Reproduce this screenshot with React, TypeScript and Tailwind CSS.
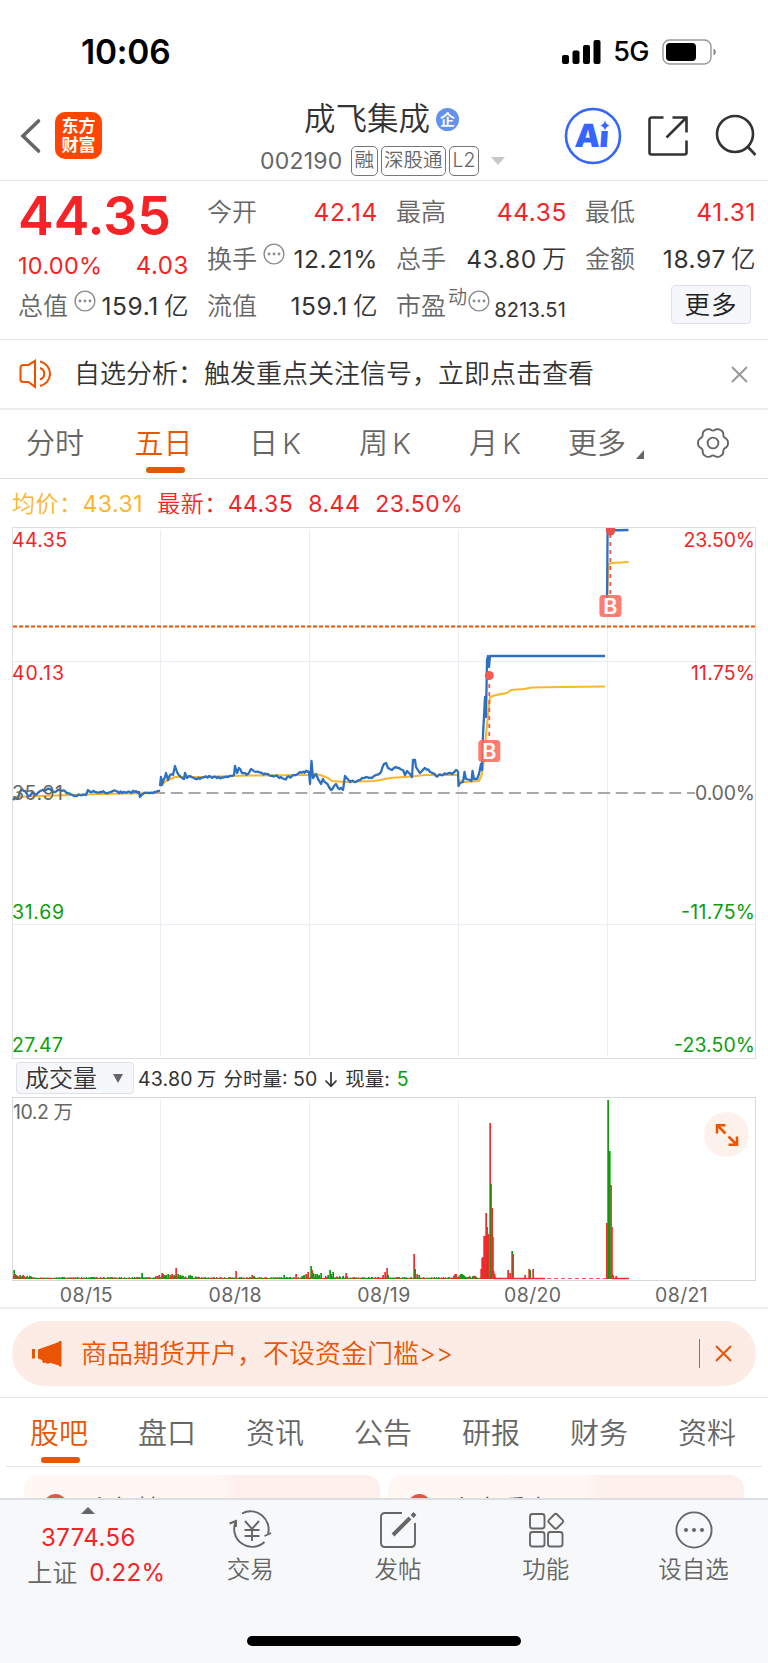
import type { ReactNode } from 'react';

const FONT = "font-[Inter,'Noto_Sans_CJK_SC',sans-serif]";

type Point = [number, number];

const toPath = (points: Point[]) =>
  points.map(([x, y], i) => `${i ? 'L' : 'M'}${x} ${y}`).join('');

// small deterministic jitter, so that the minute lines look traded
function jitter(points: Point[], amp: number): Point[] {
  const out: Point[] = [];
  points.forEach(([x, y], i) => {
    out.push([x, y]);
    const next = points[i + 1];
    if (!next) return;
    const steps = Math.floor((next[0] - x) / 1.4);
    for (let s = 1; s < steps; s++) {
      const t = s / steps;
      const px = x + (next[0] - x) * t;
      const n = Math.sin(px * 12.9898) * 43758.5453;
      const r = n - Math.floor(n) - 0.5;
      out.push([+px.toFixed(1), +(y + (next[1] - y) * t + r * amp).toFixed(1)]);
    }
  });
  return out;
}

const PRICE: Point[][] = [
  [
    [13, 800], [15, 798], [17, 799], [19, 795], [22, 789], [25, 791], [28, 796], [32, 793], [36, 795], [40, 791], [46, 790],
    [50, 789], [55, 792], [58, 790], [62, 791], [68, 793], [74, 796], [80, 795], [86, 795], [88, 790], [92, 792],
    [100, 792], [108, 793], [116, 791], [122, 793], [130, 792], [139, 792], [140, 797], [143, 794], [150, 793], [156, 792], [160, 791],
  ],
  [
    [160, 786], [161, 777], [162, 785], [165, 777], [166, 773], [168, 780], [170, 775], [173, 775], [175, 766], [177, 772],
    [180, 776], [184, 779], [185, 773], [187, 778], [190, 776], [194, 778], [200, 779], [209, 776], [217, 778],
    [225, 777], [234, 775], [235, 766], [237, 773], [239, 768], [242, 773], [248, 774], [251, 769], [256, 772],
    [262, 773], [268, 774], [275, 776], [284, 779], [292, 776], [300, 772], [309, 771],
  ],
  [
    [309, 771], [310, 784], [311.5, 761], [313, 778], [316, 774], [318, 779], [321, 784], [323, 779], [326, 783], [329, 787], [331, 790],
    [334, 786], [336, 784], [338, 788], [341, 788], [343, 790], [345, 776], [350, 782], [357, 781], [362, 778],
    [366, 777], [372, 778], [376, 775], [381, 772], [384, 764], [386, 763], [388, 768], [392, 770], [396, 767], [399, 768],
    [403, 770], [405, 775], [407, 771], [410, 774], [412, 777], [413, 760], [415, 760], [416, 767], [420, 773],
    [425, 768], [430, 772], [436, 776], [446, 774], [452, 774], [456, 770], [458, 771],
  ],
  [
    [458, 771], [458.5, 786], [460, 783], [463, 782], [464.5, 772], [466, 779], [470, 780], [471.5, 781], [472.5, 771], [474, 779],
    [477, 779], [479, 774], [481, 764], [482, 770], [483, 735], [485, 697], [486, 717], [487, 660], [488, 656], [489, 667], [490, 656],
    [605, 656],
  ],
  [[606.8, 614], [607.2, 580], [607.6, 530.5], [628.5, 530]],
];

const AVERAGE: Point[][] = [
  [[13, 797], [40, 796], [100, 794], [160, 793]],
  [[160, 786], [166, 781], [175, 777], [200, 777], [250, 775.5], [309, 775]],
  [[309, 773], [320, 775], [328, 778], [332, 781], [345, 782], [375, 781], [390, 778], [412, 776.5], [425, 775], [458, 775]],
  [[459, 780], [464, 782], [472, 781.5], [479, 781], [482, 774], [484, 760], [486, 735], [488, 715], [490, 697], [496, 695], [507, 693], [511, 690], [524, 689], [532, 687.5], [560, 687], [605, 686.5]],
  [[607, 600], [608.5, 564], [612, 563], [628.5, 562]],
];

const GRID_X = [160.5, 309.5, 458.5, 607.5];

// x, height, colour (r = up, g = down)
const SPIKES: [number, number, 'r' | 'g'][] = [
  [14, 9, 'g'], [15, 5, 'r'], [16, 4, 'r'], [17, 3, 'g'], [20, 4, 'g'], [23, 4, 'r'], [24, 3, 'r'], [142, 6, 'g'],
  [157, 3, 'r'], [159, 4, 'r'], [162, 6, 'r'], [163, 5, 'r'], [164, 4, 'g'], [166, 4, 'g'], [168, 5, 'g'], [170, 4, 'r'], [172, 5, 'r'], [174, 4, 'g'],
  [176, 11, 'r'], [178, 5, 'g'], [180, 4, 'g'], [190, 4, 'g'], [236, 8, 'r'], [252, 4, 'r'], [254, 3, 'g'], [284, 4, 'g'], [296, 5, 'r'],
  [302, 3, 'g'], [304, 4, 'g'], [306, 5, 'r'], [308, 7, 'r'], [311, 13, 'g'], [312, 9, 'r'], [313, 6, 'g'], [315, 5, 'g'], [317, 5, 'g'], [319, 4, 'g'], [321, 6, 'g'],
  [328, 4, 'g'], [330, 9, 'g'], [331, 5, 'g'], [333, 7, 'g'], [346, 6, 'r'], [383, 4, 'r'], [385, 7, 'r'], [387, 11, 'r'], [388, 4, 'g'],
  [414, 25, 'r'], [415, 10, 'g'], [417, 5, 'r'], [419, 4, 'g'], [455, 5, 'r'], [456, 5, 'r'], [460, 4, 'g'], [461, 5, 'g'], [462, 5, 'g'], [463, 4, 'g'],
  [481, 10, 'r'], [482, 21, 'r'], [483, 22, 'r'], [484, 43, 'r'], [485, 43, 'r'], [486, 66, 'r'], [487, 52, 'r'], [487.6, 26, 'g'], [488.6, 45, 'r'],
  [490, 156, 'r'], [490.9, 95, 'g'], [492, 71, 'r'], [492.8, 42, 'r'], [493.5, 8, 'r'], [494.5, 5, 'r'],
  [508, 9, 'r'], [510, 6, 'r'], [512, 28, 'g'], [513, 25, 'r'], [525, 4, 'r'], [529, 10, 'r'], [530, 9, 'g'], [533, 10, 'r'],
  [606.7, 56, 'r'], [610.9, 94, 'r'], [611.8, 52, 'r'], [608, 179, 'g'], [609.6, 128, 'g'], [613, 4, 'r'], [616, 3, 'r'],
];

const COLORS = { r: '#f52a2d', g: '#0a9c0a' };

const BASE_BARS = Array.from({ length: 484 }, (_, i) => {
  const x = 13 + i;
  const n = Math.abs(Math.sin(x * 78.233) * 43758.5453) % 1;
  const m = Math.abs(Math.sin(x * 12.11) * 9631.17) % 1;
  const lively = [18, 168, 185, 316, 334, 466, 492].some((c) => Math.abs(x - c) < 14);
  return { x, h: 0.9 + n * (lively ? 2.6 : 1.2), c: m > 0.45 ? COLORS.g : COLORS.r };
});

function Marker({ x, y }: { x: number; y: number }) {
  return (
    <g>
      <rect x={x} y={y} width="22" height="22" rx="3.5" fill="#ff6a5c" fillOpacity="0.88" />
      <text x={x + 11} y={y + 18.5} textAnchor="middle" fontSize="21.5" fontWeight="600" fill="#fff">
        B
      </text>
    </g>
  );
}

function PriceChart() {
  return (
    <svg className="block font-normal" width="768" height="532" viewBox="0 527 768 532" fontSize="19.5">
      <path d="M160.5 530V1056M309.5 530V1056M458.5 530V1056M607.5 530V1056M13 661.5H755M13 924.5H755" stroke="#e9edf4" fill="none" />
      <rect x="12.5" y="527.5" width="743" height="531" fill="none" stroke="#dcdee3" />
      <path d="M13 626.5H755" stroke="#ea5504" strokeWidth="2" strokeDasharray="4 2" />
      <path d="M160 793H695" stroke="#a9a9a9" strokeWidth="2" strokeDasharray="12 5.8" strokeDashoffset="7" />
      <g fill="none" stroke="#fdb52b" strokeWidth="2.1" strokeLinejoin="round">
        {AVERAGE.map((day, i) => (
          <path key={i} d={toPath(day)} />
        ))}
      </g>
      <g fill="none" stroke="#2d70c0" strokeWidth="2.3" strokeLinejoin="round">
        {PRICE.map((day, i) => (
          <path key={i} d={toPath(i < 3 ? jitter(day, 2.4) : day)} />
        ))}
      </g>
      <path d="M489.3 676V740M610.3 534V595" stroke="#fb5347" strokeWidth="1.8" strokeDasharray="4 4" />
      <circle cx="489.3" cy="675.5" r="4.5" fill="#f45b52" />
      <path d="M606 528h9v3a4.5 4.5 0 0 1-9 0z" fill="#e5514b" />
      <Marker x={478.3} y={740} />
      <Marker x={599.4} y={595} />
      <g fill="#f52325">
        <text x="12" y="547.3" textLength="55">44.35</text>
        <text x="755" y="547.3" textAnchor="end" textLength="71.5">23.50%</text>
        <text x="12" y="680" textLength="52">40.13</text>
        <text x="755" y="680" textAnchor="end" textLength="64">11.75%</text>
      </g>
      <g fill="#666">
        <text x="12" y="800" textLength="51">35.91</text>
        <text x="755" y="800" textAnchor="end" textLength="60">0.00%</text>
      </g>
      <g fill="#0ba00b">
        <text x="12" y="919" textLength="52">31.69</text>
        <text x="755" y="919" textAnchor="end" textLength="74">-11.75%</text>
        <text x="12" y="1051.5" textLength="51">27.47</text>
        <text x="755" y="1051.5" textAnchor="end" textLength="81">-23.50%</text>
      </g>
    </svg>
  );
}

function VolumeChart() {
  return (
    <svg className="block" width="768" height="184" viewBox="0 1097 768 184" fontSize="19.5">
      {GRID_X.map((x) => (
        <path key={x} d={`M${x} 1100V1280`} stroke="#e9edf4" />
      ))}
      <rect x="12.5" y="1097.5" width="743" height="183" fill="none" stroke="#d6d8dd" />
      {BASE_BARS.map(({ x, h, c }) => (
        <rect key={x} x={x} y={1279 - h} width="1.1" height={h} fill={c} />
      ))}
      {SPIKES.map(([x, h, c]) => (
        <rect key={x} x={x - 0.7} y={1279 - h} width="1.7" height={h} fill={COLORS[c]} />
      ))}
      <path d="M493 1278.5h52M612 1278.5h17" stroke={COLORS.r} strokeWidth="1.4" />
      <path d="M547 1278.5h60" stroke={COLORS.r} strokeDasharray="4 3" strokeWidth="0.8" />
      <text x="13" y="1119" fill="#666" textLength="60" fontWeight="400">
        10.2 万
      </text>
    </svg>
  );
}

function Dots() {
  return (
    <svg className="shrink-0" width="22" height="22" viewBox="0 0 22 22" fill="#8a8a8a">
      <circle cx="11" cy="11" r="9.9" fill="none" stroke="#8a8a8a" strokeWidth="1.4" />
      <circle cx="6" cy="11" r="1.4" />
      <circle cx="11" cy="11" r="1.4" />
      <circle cx="16" cy="11" r="1.4" />
    </svg>
  );
}

function Stat({
  label,
  value,
  unit,
  red,
  icon,
}: {
  label: string;
  value: string;
  unit?: string;
  red?: boolean;
  icon?: boolean;
}) {
  return (
    <div className="flex h-[47px] items-center justify-between whitespace-nowrap">
      <span className="flex items-center text-[25px] text-[#666]">
        {label}
        {icon && <span className="-mt-3 ml-[6px]"><Dots /></span>}
      </span>
      <span
        className={
          red
            ? '-mr-px text-[24.5px] font-normal tracking-[0.6px] text-[#f52325]'
            : '-mr-px text-[24.5px] font-normal tracking-[0.6px] text-[#333]'
        }
      >
        {value}
        {unit && <span className="ml-[5px] font-[350]">{unit}</span>}
      </span>
    </div>
  );
}

function StatusBar() {
  return (
    <div className="flex h-[92px] items-center justify-between pt-[12px] pr-[50px] pl-[81px]">
      <span className="text-[33.5px] font-semibold tracking-[-0.2px] text-black">10:06</span>
      <div className="flex items-center">
        <svg width="40" height="26" viewBox="0 0 40 26">
          <rect x="1" y="16" width="7" height="9" rx="2" />
          <rect x="11.5" y="11.5" width="7" height="13.5" rx="2" />
          <rect x="22" y="6" width="7" height="19" rx="2" />
          <rect x="32.5" y="1" width="7" height="24" rx="2" />
        </svg>
        <span className="ml-3 text-[27px] font-medium tracking-[-0.5px] text-black">5G</span>
        <svg className="ml-[13px]" width="56" height="26" viewBox="0 0 56 26">
          <rect x="1" y="1" width="48" height="24" rx="6.5" fill="none" stroke="#999" strokeWidth="1.4" />
          <rect x="4" y="4" width="30" height="18" rx="4" />
          <path d="M51.5 9.5c3 1.5 3 5.5 0 7z" fill="#888" />
        </svg>
      </div>
    </div>
  );
}

function Badge({ children }: { children: ReactNode }) {
  return (
    <span className="flex h-[30px] items-center justify-center rounded-[5px] border border-[#777] px-[2.5px] text-[19.5px] leading-none text-[#666]">
      {children}
    </span>
  );
}

function Header() {
  return (
    <div className="flex h-[89px] border-b border-[#e8e8e8]">
      <div className="flex w-[261px] items-start pt-5 pl-5">
        <svg className="mt-[6px]" width="22" height="36" viewBox="0 0 22 36" fill="none" stroke="#666" strokeWidth="3.6" strokeLinecap="round">
          <path d="M18.5 3L3 18l15.5 15" />
        </svg>
        <div className="ml-[13px] flex h-[47px] w-[47px] flex-col items-center justify-center rounded-[10px] bg-[#ff4500] text-[17px] leading-[19px] font-bold text-white">
          <span>东方</span>
          <span>财富</span>
        </div>
      </div>
      <div className="flex flex-1 flex-col whitespace-nowrap">
        <div className="mt-[7px] flex h-10 items-center pl-[43px]">
          <span className="text-[31.5px] text-[#333]">成飞集成</span>
          <span className="ml-[6px] flex h-[23px] w-[23px] items-center justify-center rounded-full bg-[#6490ee] text-[15px] leading-none font-bold text-white">
            企
          </span>
        </div>
        <div className="mt-[7px] flex h-[30px] items-center">
          <span className="mr-[8px] -ml-px w-[83px] text-[23px] font-normal tracking-[0.2px] text-[#666]">002190</span>
          <div className="flex gap-[3px]">
            <Badge>融</Badge>
            <Badge>深股通</Badge>
            <Badge>L2</Badge>
          </div>
          <svg className="ml-3" width="14" height="8" viewBox="0 0 14 8" fill="#c8c8c8">
            <path d="M0 0h14l-7 8z" />
          </svg>
        </div>
      </div>
      <div className="flex w-[204px] items-start pt-[15px]">
        <svg width="58" height="58" viewBox="0 0 58 58" fill="#3565ff">
          <circle cx="29" cy="29" r="27" fill="none" stroke="#3565ff" strokeWidth="2.6" />
          <text x="11" y="40" fontSize="32" fontWeight="900" textLength="34" transform="skewX(-4) translate(2 0)">Ai</text>
          <rect x="34" y="12" width="13" height="12" fill="#fff" />
          <path d="M41 13.5c1 3.2 1.8 4 5 5-3.2 1-4 1.8-5 5-1-3.2-1.8-4-5-5 3.2-1 4-1.8 5-5z" />
        </svg>
        <svg className="mt-[8px] ml-[25px]" width="42" height="42" viewBox="0 0 42 42" fill="none" stroke="#333" strokeWidth="2.6">
          <path d="M16.5 2.5H4.5a2 2 0 0 0-2 2v33a2 2 0 0 0 2 2h33a2 2 0 0 0 2-2V25.500M25.500 2.500h14v15M39.500 2.500L19.500 22.500" />
        </svg>
        <svg className="mt-[7px] ml-[25px]" width="44" height="44" viewBox="0 0 44 44" fill="none" stroke="#333" strokeWidth="2.6">
          <circle cx="21" cy="20" r="18" />
          <path d="M33.5 32.5l8 8.5" />
        </svg>
      </div>
    </div>
  );
}

function Quote() {
  return (
    <div className="grid h-[159px] grid-cols-[170px_170px_170px_170px] gap-x-[19px] border-b border-[#e5e5e5] pt-[8px] pl-[18px]">
      <div className="flex flex-col">
        <div className="-mt-px h-[57px] text-[53.5px] leading-[56px] font-semibold text-[#f52325]">44.35</div>
        <div className="flex h-[38px] items-center justify-between pt-[3px] text-[23.5px] font-normal text-[#f52325]">
          <span className="tracking-[0.3px]">10.00%</span>
          <span className="-mr-px text-[24px] tracking-[0.6px]">4.03</span>
        </div>
        <Stat label="总值" value="159.1" unit="亿" icon />
      </div>
      <div>
        <Stat label="今开" value="42.14" red />
        <Stat label="换手" value="12.21%" icon />
        <Stat label="流值" value="159.1" unit="亿" />
      </div>
      <div>
        <Stat label="最高" value="44.35" red />
        <Stat label="总手" value="43.80" unit="万" />
        <div className="flex h-[47px] items-center whitespace-nowrap">
          <span className="text-[25px] text-[#666]">市盈</span>
          <span className="-mt-4 ml-[2px] text-[19px] text-[#666]">动</span>
          <span className="-mt-3 ml-px"><Dots /></span>
          <span className="mt-[7px] ml-auto text-[20px] font-normal tracking-[0.2px] text-[#333]">8213.51</span>
        </div>
      </div>
      <div>
        <Stat label="最低" value="41.31" red />
        <Stat label="金额" value="18.97" unit="亿" />
        <div className="mt-[2px] ml-[86px] flex h-[39px] w-20 items-center justify-center rounded border border-[#dfe1e6] bg-[#f6f7fa] pt-[2px] text-[25.5px] tracking-[1px] text-[#222]">
          更多
        </div>
      </div>
    </div>
  );
}

function Notice() {
  return (
    <div className="flex h-[70px] items-center border-b-2 border-[#ededed] pr-[20px] pl-[19px]">
      <svg width="34" height="30" viewBox="0 0 34 30" fill="none" stroke="#ea5504" strokeWidth="2.1">
        <path d="M16 1.8L9.5 6H4.5Q1.5 6 1.5 9v11.5Q1.5 23 4.5 23h5L16 27.8zM21 2.5a12.5 12.5 0 0 1 0 24.5M21 9a6 6 0 0 1 0 11.5" />
      </svg>
      <span className="-mt-px ml-[21px] text-[26px] text-[#333]">自选分析：触发重点关注信号，立即点击查看</span>
      <svg className="ml-auto" width="17" height="17" viewBox="0 0 17 17" stroke="#999" strokeWidth="2">
        <path d="M1 1l15 15M16 1L1 16" />
      </svg>
    </div>
  );
}

const GEAR =
  Array.from({ length: 72 }, (_, i) => {
    const a = (i / 72) * Math.PI * 2;
    const r = 14 + 1.3 * Math.cos(6 * a) - 0.3 * Math.cos(12 * a);
    return `${i ? 'L' : 'M'}${(17 + r * Math.cos(a)).toFixed(2)} ${(17 + r * Math.sin(a)).toFixed(2)}`;
  }).join('') + 'z';

function PeriodTabs() {
  const tabs = ['分时', '五日', '日 K', '周 K', '月 K'];
  return (
    <div className="flex h-[69px] border-b border-[#dcdde3] text-[29px] text-[#666]">
      {tabs.map((tab) => (
        <div key={tab} className="flex w-[110px] flex-col items-center">
          <span
            className={
              tab === '五日'
                ? 'mt-[13px] -ml-[3px] leading-[42px] whitespace-nowrap text-[#ea5504]'
                : 'mt-[13px] leading-[42px] [word-spacing:-4px] whitespace-nowrap'
            }
          >
            {tab}
          </span>
          {tab === '五日' && <span className="mt-[2px] h-[6px] w-[39px] rounded-full bg-[#ea5504]" />}
        </div>
      ))}
      <span className="mt-[13px] ml-[18px] leading-[42px]">更多</span>
      <svg className="mt-[40px] ml-[10px]" width="8" height="9" viewBox="0 0 8 9" fill="#666">
        <path d="M8 0v9H0z" />
      </svg>
      <svg className="mt-4 ml-[52px]" width="34" height="34" viewBox="0 0 34 34" fill="none" stroke="#666" strokeWidth="1.9">
        <path d={GEAR} />
        <circle cx="17" cy="17" r="5.4" />
      </svg>
    </div>
  );
}

function VolumeHeader() {
  return (
    <div className="flex h-[38px] items-center pl-4 text-[19.5px] whitespace-nowrap text-[#333]">
      <div className="flex h-8 w-[118px] items-center justify-between rounded border border-[#dfe1e6] bg-[#f6f7fa] pr-[10px] pl-[8px] text-[24px]">
        <span className="pt-[2px]">成交量</span>
        <svg width="10" height="9" viewBox="0 0 10 9" fill="#666">
          <path d="M0 0h10L5 9z" />
        </svg>
      </div>
      <div className="flex items-center pt-[3px] font-normal">
        <span className="ml-[4px] tracking-[0.2px]">43.80<span className="ml-[4px]">万</span></span>
        <span className="ml-[7px]">分时量: 50</span>
        <svg className="mx-[7px]" width="14" height="17" viewBox="0 0 14 17" fill="none" stroke="#333" strokeWidth="1.7">
          <path d="M7 1v14M1.5 9.5L7 15.3l5.5-5.8" />
        </svg>
        <span>现量:</span>
        <span className="ml-[7px] text-[#0ba00b]">5</span>
      </div>
    </div>
  );
}

function Banner() {
  return (
    <div className="mx-3 mt-3 flex h-[65px] items-center rounded-full bg-[#fcece5] pr-6 pl-5 text-[#ea5504]">
      <svg width="30" height="26" viewBox="0 0 30 26" fill="#ea5504">
        <path d="M0 8h3v9.5H0zM6 8.5L27 1V0h2.5v25.5H27v-1l-9-2.8c-1.5 1.5-3 1.3-4 0l-3 .3-1-3-4-1.5z" />
      </svg>
      <span className="ml-[19px] text-[26px]">{'商品期货开户，不设资金门槛>>'}</span>
      <span className="ml-auto h-[29px] w-[1.5px] bg-[#ea5504]" />
      <svg className="ml-[15px]" width="17" height="17" viewBox="0 0 17 17" stroke="#ea5504" strokeWidth="2">
        <path d="M1 1l15 15M16 1L1 16" />
      </svg>
    </div>
  );
}

function SectionTabs() {
  const tabs = ['股吧', '盘口', '资讯', '公告', '研报', '财务', '资料'];
  return (
    <div className="mx-[6px] flex h-[69px] border-b border-[#e3e3e3] text-[29px] text-[#666]">
      {tabs.map((tab, i) => (
        <div key={tab} className="flex w-[108px] flex-col items-center">
          <span
            className={
              i === 0
                ? 'mt-[15px] -ml-[2px] leading-[42px] text-[#ea5504]'
                : 'mt-[15px] -ml-[2px] leading-[42px]'
            }
          >
            {tab}
          </span>
          {i === 0 && <span className="mt-[2px] h-[6px] w-[39px] rounded-full bg-[#ea5504]" />}
        </div>
      ))}
    </div>
  );
}

// only the top edge of the cards shows above the bottom bar
function Cards() {
  return (
    <div className="flex h-[31px] gap-2 overflow-hidden px-6 pt-2">
      {['人气榜', '主力看点'].map((title) => (
        <div
          key={title}
          className="flex h-20 w-[356px] items-start rounded-[14px] bg-linear-to-r from-[#fef7f4] from-55% to-[#fdefec] to-60% pt-[19px] pl-5"
        >
          <span className="h-[23px] w-[23px] rounded-full bg-[#e0564f]" />
          <span className="ml-5 text-[25px] leading-[30px] text-[#555]">{title}</span>
        </div>
      ))}
    </div>
  );
}

function NavItem({ label, children }: { label: string; children: ReactNode }) {
  return (
    <div className="flex w-[148px] flex-col items-center pt-[9px]">
      <svg width="44" height="42" viewBox="0 0 44 42" fill="none" stroke="#666" strokeWidth="1.9">
        {children}
      </svg>
      <span className="mt-px -ml-px text-[23.5px] leading-9">{label}</span>
    </div>
  );
}

function BottomBar() {
  return (
    <div className="flex h-[166px] flex-col border-t-2 border-[#dcdee3] bg-[#f6f8fa] text-[#666]">
      <div className="flex">
        <div className="flex w-[177px] flex-col items-center pt-[7px] text-[24px]">
          <svg width="14" height="7" viewBox="0 0 14 7" fill="#666">
            <path d="M7 0l7 7H0z" />
          </svg>
          <span className="mt-[6px] leading-9 font-normal tracking-[0.4px] text-[#f52325]">3774.56</span>
          <span className="ml-4 flex gap-[12px] leading-[34px]">
            <span className="text-[25px]">上证</span>
            <span className="font-normal tracking-[0.4px] text-[#f52325]">0.22%</span>
          </span>
        </div>
        <NavItem label="交易">
          <path d="M13 4.5A18 18 0 0 1 39 25M35.5 33A18 18 0 0 1 7 12M.5 14.5L7 12v6M35.5 27l6.5-3" />
          <path d="M16 12l7 8 7-8M15.5 21h15M15.5 27h15M23 20v12" />
        </NavItem>
        <NavItem label="发帖">
          <path d="M26 4H9q-4 0-4 4v26q0 4 4 4h26q4 0 4-4V14" />
          <path d="M17 26l17-17M36 7.5l3-3" strokeWidth="4" />
        </NavItem>
        <NavItem label="功能">
          <rect x="6" y="5" width="14.5" height="14.5" rx="2.5" />
          <rect x="6" y="23" width="14.5" height="14.5" rx="2.5" />
          <rect x="24" y="23" width="14.5" height="14.5" rx="2.5" />
          <rect x="26" y="6.5" width="11.5" height="11.5" rx="2" transform="rotate(45 31.75 12.25)" />
        </NavItem>
        <NavItem label="设自选">
          <circle cx="22" cy="21" r="17.6" />
          <g fill="#666" stroke="none">
            <circle cx="14" cy="21" r="2" />
            <circle cx="22" cy="21" r="2" />
            <circle cx="30" cy="21" r="2" />
          </g>
        </NavItem>
      </div>
      <div className="mx-auto mt-auto mb-[18px] h-[10px] w-[274px] rounded-full bg-black" />
    </div>
  );
}

export default function App() {
  return (
    <div className={`${FONT} h-[1663px] w-[768px] overflow-hidden bg-white font-[350]`}>
      <StatusBar />
      <Header />
      <Quote />
      <Notice />
      <PeriodTabs />
      <div className="flex h-[48px] items-center gap-[15px] pt-[2px] pl-3 text-[23px] font-normal tracking-[0.5px] whitespace-nowrap text-[#f52325]">
        <span className="text-[#fdb52b]"><span className="font-[350]">均价：</span>43.31</span>
        <span className="-ml-px"><span className="font-[350]">最新：</span>44.35</span>
        <span>8.44</span>
        <span>23.50%</span>
      </div>
      <div className="relative">
        <PriceChart />
        <VolumeHeader />
        <VolumeChart />
        <div className="absolute right-[19px] bottom-[124px] flex h-[45px] w-[45px] items-center justify-center rounded-full bg-[#fdf1eb]">
          <svg width="24" height="24" viewBox="0 0 24 24" fill="none" stroke="#ea5504" strokeWidth="2.5">
            <path d="M2 10.5V2.2h8.5M2.5 2.5l8 8M22 13.5v8.3h-8.5M21.5 21.5l-8-8" />
          </svg>
        </div>
      </div>
      <div className="flex h-[28px] border-b-2 border-[#eee] pl-3 text-[19.5px] leading-[29px] font-normal tracking-[0.4px] text-[#666]">
        {['08/15', '08/18', '08/19', '08/20', '08/21'].map((day) => (
          <span key={day} className="w-[148.8px] text-center">
            {day}
          </span>
        ))}
      </div>
      <Banner />
      <div className="mt-[11px] border-b border-[#e3e3e3]" />
      <SectionTabs />
      <Cards />
      <BottomBar />
    </div>
  );
}
